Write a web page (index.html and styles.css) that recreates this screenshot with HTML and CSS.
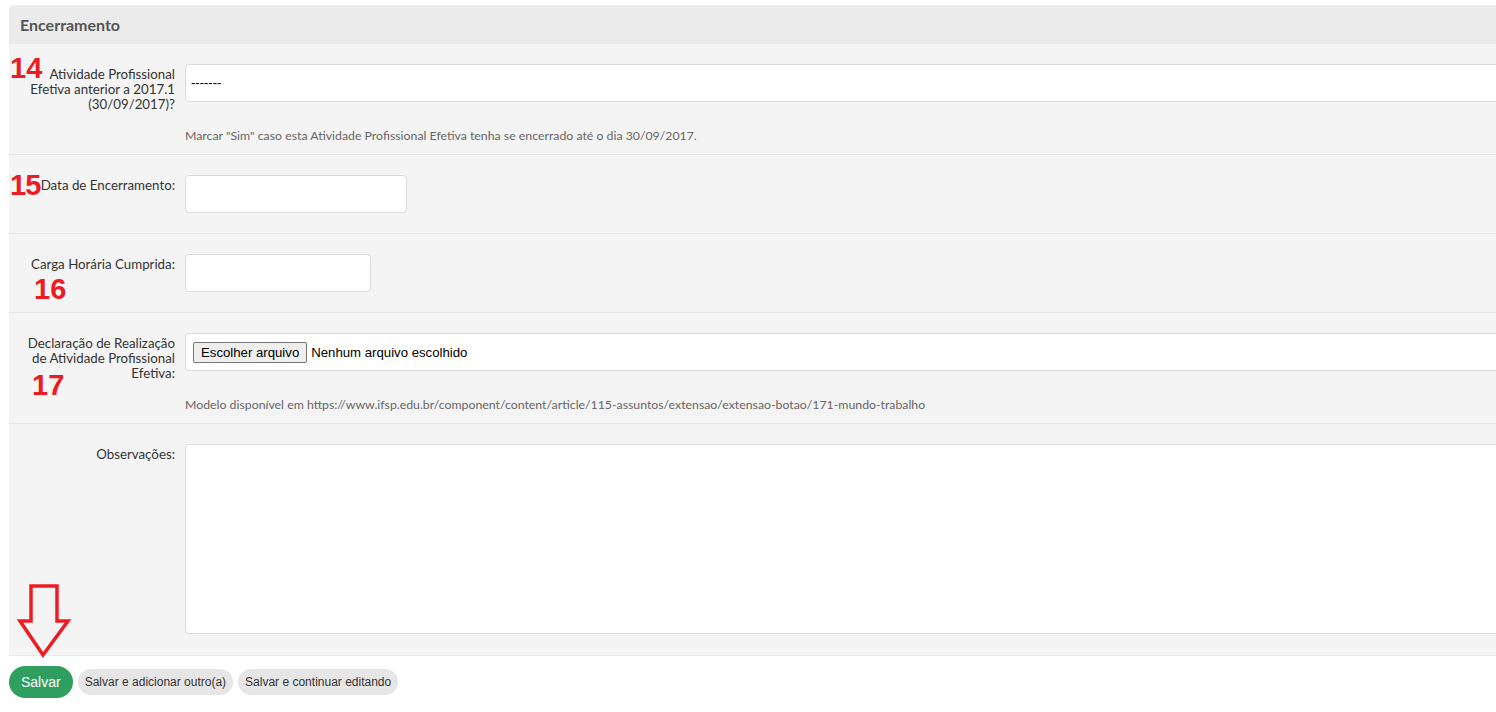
FILE: index.html
```html
<!DOCTYPE html>
<html lang="pt-br">
<head>
    <meta charset="UTF-8">
    <title>Encerramento</title>
    <link rel="stylesheet" href="styles.css">
</head>
<body>
    <div class="page">
        <fieldset class="module">
            <h2>Encerramento</h2>

            <!-- Row 14 -->
            <div class="form-row">
                <span class="mark mark-14">14</span>
                <label class="field-label">Atividade Profissional Efetiva anterior a 2017.1 (30/09/2017)?</label>
                <div class="field">
                    <div class="select-box">-------</div>
                    <div class="help">Marcar "Sim" caso esta Atividade Profissional Efetiva tenha se encerrado até o dia 30/09/2017.</div>
                </div>
            </div>

            <!-- Row 15 -->
            <div class="form-row">
                <span class="mark mark-15">15</span>
                <label class="field-label">Data de Encerramento:</label>
                <div class="field">
                    <input type="text" class="input-date">
                </div>
            </div>

            <!-- Row 16 -->
            <div class="form-row">
                <span class="mark mark-16">16</span>
                <label class="field-label">Carga Horária Cumprida:</label>
                <div class="field">
                    <input type="text" class="input-hours">
                </div>
            </div>

            <!-- Row 17 -->
            <div class="form-row">
                <span class="mark mark-17">17</span>
                <label class="field-label">Declaração de Realização de Atividade Profissional Efetiva:</label>
                <div class="field">
                    <div class="file-box">
                        <button type="button" class="file-btn">Escolher arquivo</button>
                        <span class="file-name">Nenhum arquivo escolhido</span>
                    </div>
                    <div class="help help-file">Modelo disponível em https://www.ifsp.edu.br/component/content/article/115-assuntos/extensao/extensao-botao/171-mundo-trabalho</div>
                </div>
            </div>

            <!-- Observações -->
            <div class="form-row last">
                <label class="field-label">Observações:</label>
                <div class="field">
                    <textarea class="notes"></textarea>
                </div>
            </div>
        </fieldset>

        <div class="submit-row">
            <svg class="arrow" width="56" height="80" viewBox="0 0 56 80">
                <polygon points="15,3 41,3 41,38 52,38 27,72 4,38 15,38" fill="none" stroke="#ed1c24" stroke-width="3.5" stroke-linejoin="miter"/>
            </svg>
            <button class="btn btn-save">Salvar</button>
            <button class="btn btn-grey">Salvar e adicionar outro(a)</button>
            <button class="btn btn-grey">Salvar e continuar editando</button>
        </div>
    </div>
</body>
</html>
```

FILE: styles.css
```css
/* Page base */
body {
    margin: 0;
    background: #fff;
    font-family: Lato, "Open Sans", sans-serif;
    color: #333;
}
.page {
    padding: 5px 0 0 9px;
    overflow: hidden;
    width: 1487px;
    height: 707px;
}
/* The grey panel runs past the right edge */
.module {
    width: 1520px;
    margin: 0;
    padding: 0;
    border: none;
    border-bottom: 1px solid #ebebeb;
    border-radius: 5px 5px 0 0;
    background: #f4f4f4;
}
.module h2 {
    margin: 0;
    height: 39px;
    line-height: 39px;
    padding-left: 11px;
    font-size: 16px;
    font-weight: bold;
    color: #555;
    background: #ebebeb;
    border-radius: 5px 5px 0 0;
}
/* Form rows */
.form-row {
    position: relative;
    display: flex;
    align-items: flex-start;
    padding: 20px 0;
    border-bottom: 1px solid #e6e6e6;
}
.form-row.last {
    border-bottom: none;
    padding-bottom: 21px;
}
.field-label {
    flex: 0 0 154px;
    padding: 3px 0 0 12px;
    text-align: right;
    font-size: 13.3px;
    line-height: 15px;
    color: #333;
}
.field {
    margin-left: 10px;
    flex: 1;
}
/* Inputs */
.select-box, .file-box, input, .notes {
    box-sizing: border-box;
    background: #fff;
    border: 1px solid #dcdcdc;
    border-radius: 4px;
}
.select-box {
    height: 38px;
    line-height: 36px;
    padding-left: 5px;
    font-family: Arial, "Liberation Sans", sans-serif;
    font-size: 13px;
    color: #000;
}
input {
    display: block;
    height: 38px;
    margin: 0;
}
.input-date {
    width: 222px;
}
.input-hours {
    width: 186px;
}
.file-box {
    height: 38px;
    display: flex;
    align-items: center;
    padding-left: 7px;
    font-family: Arial, "Liberation Sans", sans-serif;
    font-size: 13.2px;
    color: #000;
}
.file-btn {
    font-family: Arial, "Liberation Sans", sans-serif;
    font-size: 13.2px;
    color: #000;
    background: #efefef;
    border: 1px solid #767676;
    border-radius: 2px;
    padding: 1px 7px;
    margin-right: 4px;
    height: 21px;
}
.notes {
    display: block;
    width: 100%;
    height: 190px;
    margin: 0;
    resize: none;
}
/* Help text under a field */
.help {
    margin-top: 26px;
    font-size: 12.3px;
    line-height: 16px;
    color: #666;
}
.help-file {
    margin-top: 26px;
}
.form-row:first-of-type {
    padding-bottom: 10px;
}
.form-row:nth-of-type(4) {
    padding-bottom: 10px;
}
/* Red annotation numbers drawn over the form */
.mark {
    position: absolute;
    font-family: Arial, "Liberation Sans", sans-serif;
    font-weight: bold;
    font-size: 29px;
    line-height: 29px;
    color: #ed1c24;
}
.mark-14 { left: 1px; top: 10px; }
.mark-15 { left: 1px; top: 16px; letter-spacing: -1px; }
.mark-16 { left: 25px; top: 41px; }
.mark-17 { left: 23px; top: 58px; }
/* Buttons */
.submit-row {
    position: relative;
    display: flex;
    align-items: center;
    gap: 5px;
    margin-top: 10px;
}
.arrow {
    position: absolute;
    left: 7px;
    top: -83px;
}
.btn {
    border: none;
    font-family: Arial, "Liberation Sans", sans-serif;
    cursor: pointer;
}
.btn-save {
    height: 32px;
    padding: 0 12px;
    border-radius: 16px;
    background: #2e9f5e;
    color: #fff;
    font-size: 14px;
}
.btn-grey {
    height: 26px;
    padding: 0 7px;
    border-radius: 13px;
    background: #e6e6e6;
    color: #333;
    font-size: 12px;
}
```
